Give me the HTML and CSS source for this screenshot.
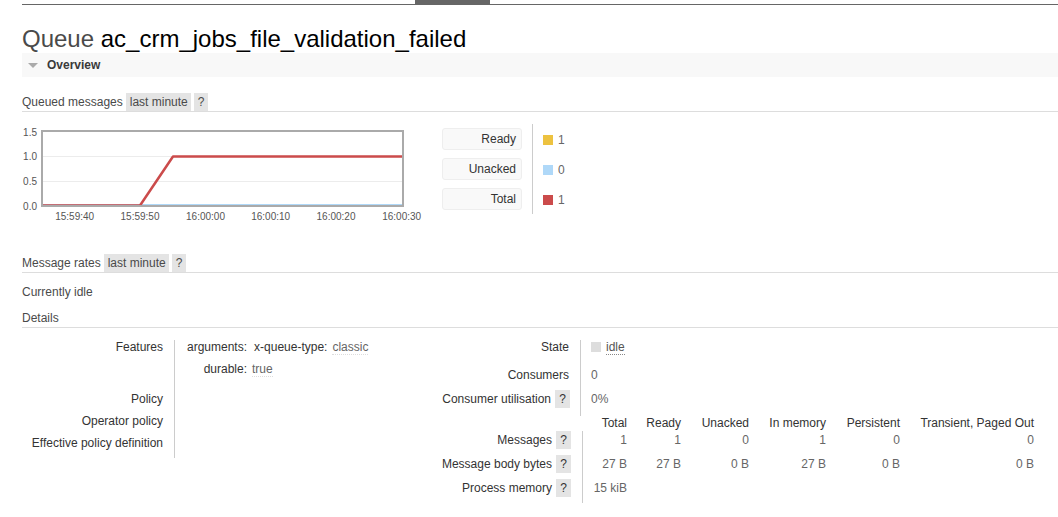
FILE: index.html
```html
<!DOCTYPE html>
<html>
<head>
<meta charset="utf-8">
<title>Queue ac_crm_jobs_file_validation_failed</title>
<link rel="stylesheet" href="styles.css">
</head>
<body>
<div class="page">
  <div class="nav"><div class="tab"></div></div>
  <h1><span class="pre">Queue</span> <b>ac_crm_jobs_file_validation_failed</b></h1>
  <div class="section-head"><span class="tri"></span>Overview</div>

  <div class="sub-head sh-queued"><span>Queued messages</span><span class="btn">last minute</span><span class="btn help">?</span></div>

  <div class="chart-row">
    <svg class="chart" width="420" height="100" viewBox="0 0 420 100">
      <g stroke="#ececec" stroke-width="1">
        <line x1="21" y1="32.5" x2="380" y2="32.5"/>
        <line x1="21" y1="57.5" x2="380" y2="57.5"/>
      </g>
      <polyline points="21,81 380,81" fill="none" stroke="#afd8f8" stroke-width="2"/>
      <polyline points="21,81.5 118,81.5 151,32.5 380,32.5" fill="none" stroke="#cb4b4b" stroke-width="2.5" stroke-linejoin="round"/>
      <rect x="20" y="7" width="361" height="75" fill="none" stroke="#aaa" stroke-width="2"/>
      <g class="ylab" text-anchor="end">
        <text x="15" y="11.8">1.5</text>
        <text x="15" y="36.3">1.0</text>
        <text x="15" y="60.8">0.5</text>
        <text x="15" y="85.8">0.0</text>
      </g>
      <g class="xlab" text-anchor="middle">
        <text x="52.7" y="95.8">15:59:40</text>
        <text x="118" y="95.8">15:59:50</text>
        <text x="183.5" y="95.8">16:00:00</text>
        <text x="248.7" y="95.8">16:00:10</text>
        <text x="314" y="95.8">16:00:20</text>
        <text x="379.7" y="95.8">16:00:30</text>
      </g>
    </svg>
    <div class="legend">
      <div class="labels">
        <div class="lab">Ready</div>
        <div class="lab">Unacked</div>
        <div class="lab">Total</div>
      </div>
      <div class="values">
        <div class="val"><span class="sw ready"></span>1</div>
        <div class="val"><span class="sw unacked"></span>0</div>
        <div class="val"><span class="sw total"></span>1</div>
      </div>
    </div>
  </div>

  <div class="sub-head sh-rates"><span>Message rates</span><span class="btn">last minute</span><span class="btn help">?</span></div>
  <p class="idle">Currently idle</p>
  <div class="sub-head sh-details"><span>Details</span></div>

  <div class="details">
    <div class="facts-left">
      <div class="k">Features</div>
      <div class="v">
        <div class="nested">
          <div class="nk">arguments:</div>
          <div class="nv"><span class="ak">x-queue-type:</span><abbr class="av">classic</abbr></div>
          <div class="nk">durable:</div>
          <div class="nv"><abbr>true</abbr></div>
        </div>
      </div>
      <div class="k">Policy</div>
      <div class="v"></div>
      <div class="k">Operator policy</div>
      <div class="v"></div>
      <div class="k">Effective policy definition</div>
      <div class="v"></div>
    </div>

    <div class="right">
      <div class="facts-right">
        <div class="k r-state">State</div>
        <div class="v r-state"><span class="state-sw"></span><abbr class="state">idle</abbr></div>
        <div class="k">Consumers</div>
        <div class="v">0</div>
        <div class="k r-cu">Consumer utilisation<span class="help-btn">?</span></div>
        <div class="v r-cu">0%</div>
      </div>

      <div class="msgs">
        <div class="hd"></div>
        <div class="hd">Total</div>
        <div class="hd">Ready</div>
        <div class="hd">Unacked</div>
        <div class="hd">In memory</div>
        <div class="hd">Persistent</div>
        <div class="hd">Transient, Paged Out</div>

        <div class="mk">Messages<span class="help-btn">?</span></div>
        <div class="mv first">1</div>
        <div class="mv">1</div>
        <div class="mv">0</div>
        <div class="mv">1</div>
        <div class="mv">0</div>
        <div class="mv">0</div>

        <div class="mk">Message body bytes<span class="help-btn">?</span></div>
        <div class="mv first">27 B</div>
        <div class="mv">27 B</div>
        <div class="mv">0 B</div>
        <div class="mv">27 B</div>
        <div class="mv">0 B</div>
        <div class="mv">0 B</div>

        <div class="mk">Process memory<span class="help-btn">?</span></div>
        <div class="mv first last">15 kiB</div>
        <div class="mv"></div>
        <div class="mv"></div>
        <div class="mv"></div>
        <div class="mv"></div>
        <div class="mv"></div>
      </div>
    </div>
  </div>
</div>
</body>
</html>
```

FILE: styles.css
```css
html, body {
  margin: 0;
  padding: 0;
  background: #fff;
}
body {
  font: 12px "Liberation Sans", Arial, sans-serif;
  color: #484848;
  overflow: hidden;
}
.page {
  padding-left: 22px;
}
.nav {
  display: flex;
  height: 4px;
  border-bottom: 1px solid #666;
}
.nav .tab {
  margin-left: 393px;
  width: 75px;
  background: #666;
}
h1 {
  margin: 20px 0 0;
  font-size: 24px;
  font-weight: normal;
  line-height: 28px;
  color: #4a4a4a;
  white-space: nowrap;
}
h1 b {
  font-weight: normal;
  color: #000;
}
.section-head {
  display: flex;
  align-items: center;
  height: 24px;
  background: #f8f8f8;
  font-weight: bold;
  color: #3a3a3a;
}
.tri {
  width: 0;
  height: 0;
  border-left: 5px solid transparent;
  border-right: 5px solid transparent;
  border-top: 5px solid #aaa;
  margin: 1px 9px 0 6px;
}
.sub-head {
  display: flex;
  height: 18px;
  line-height: 18px;
  border-bottom: 1px solid #ddd;
  color: #4a4a4a;
}
.sh-queued { margin-top: 16px; }
.sh-rates { margin-top: 30px; }
.sh-details { margin-top: 8px; }
.btn {
  background: #e4e4e4;
  padding: 0 3px 0 4px;
  margin-left: 3px;
}
.btn.help {
  padding: 0 4px;
  margin-left: 3px;
}
.chart-row {
  display: flex;
  margin-top: 12px;
  height: 100px;
}
.chart {
  display: block;
  font-family: "Liberation Sans", Arial, sans-serif;
  font-size: 10px;
}
.chart text {
  fill: #555;
}
.legend {
  display: flex;
  align-items: flex-start;
}
.labels {
  display: flex;
  flex-direction: column;
  gap: 8px;
  padding-top: 4px;
}
.lab {
  box-sizing: border-box;
  width: 80px;
  height: 22px;
  line-height: 20px;
  border: 1px solid #eee;
  border-radius: 3px;
  background: #f9f9f9;
  text-align: right;
  padding-right: 5px;
  color: #333;
}
.values {
  margin-left: 10px;
  border-left: 1px solid #ccc;
  height: 90px;
  box-sizing: border-box;
  padding: 5px 0 0 10px;
  display: flex;
  flex-direction: column;
  gap: 8px;
}
.val {
  height: 22px;
  display: flex;
  align-items: center;
  color: #666;
}
.sw {
  width: 10px;
  height: 10px;
  margin-right: 5px;
}
.sw.ready { background: #edc240; }
.sw.unacked { background: #afd8f8; }
.sw.total { background: #cb4b4b; }
.idle {
  margin: 10px 0 0;
  line-height: 18px;
  color: #4a4a4a;
}
.details {
  display: flex;
  margin-top: 12px;
}
.facts-left {
  width: 410px;
  display: grid;
  grid-template-columns: 152px 1fr;
  align-content: start;
}
.k {
  text-align: right;
  padding-right: 11px;
  padding-bottom: 8px;
  line-height: 14px;
  color: #333;
  white-space: nowrap;
}
.v {
  border-left: 1px solid #ccc;
  padding-left: 12px;
  padding-bottom: 8px;
  line-height: 14px;
  color: #666;
  white-space: nowrap;
}
.nested {
  display: grid;
  grid-template-columns: auto auto;
  justify-content: start;
}
.nk {
  text-align: right;
  color: #333;
  padding-bottom: 8px;
}
.nv {
  padding-left: 5px;
  padding-bottom: 8px;
  color: #666;
}
.ak {
  color: #333;
  margin-left: 2px;
  margin-right: 5px;
}
abbr {
  text-decoration: none;
  border-bottom: 1px dotted #ddd;
}
.right {
  display: flex;
  flex-direction: column;
}
.facts-right {
  display: grid;
  grid-template-columns: 148px auto;
  justify-content: start;
}
.facts-right .k {
  padding-right: 11px;
}
.facts-right .v {
  padding-left: 10px;
}
.facts-right .r-state {
  padding-bottom: 14px;
}
.facts-right .r-cu {
  line-height: 18px;
}
.state-sw {
  display: inline-block;
  width: 10px;
  height: 10px;
  background: #ddd;
  margin-right: 5px;
  vertical-align: -1px;
}
abbr.state {
  color: #555;
  border-bottom-color: #888;
}
.help-btn {
  display: inline-block;
  width: 15px;
  height: 18px;
  line-height: 18px;
  margin-left: 4px;
  text-align: center;
  background: #e4e4e4;
  color: #333;
}
.facts-right .r-cu .help-btn {
  margin-right: -1px;
}
.msgs {
  display: grid;
  grid-template-columns: 150px 45px 54px 68px 77px 74px 134px;
}
.hd {
  text-align: right;
  line-height: 14px;
  padding-bottom: 1px;
  color: #333;
  white-space: nowrap;
}
.mk {
  text-align: right;
  padding-right: 11px;
  line-height: 18px;
  padding-bottom: 6px;
  color: #333;
  white-space: nowrap;
}
.mv {
  text-align: right;
  line-height: 18px;
  padding-bottom: 6px;
  color: #666;
  white-space: nowrap;
}
.mv.first {
  border-left: 1px solid #ccc;
}
.mv.last {
  padding-bottom: 3px;
}
```
